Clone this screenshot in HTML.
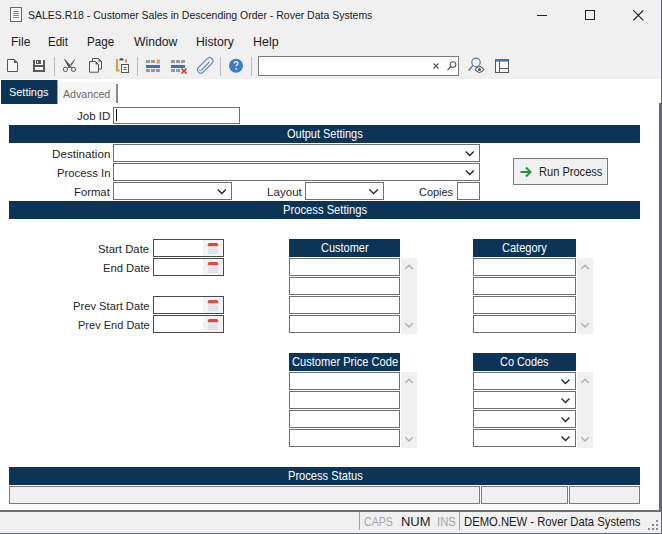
<!DOCTYPE html>
<html><head><meta charset="utf-8">
<style>
*{box-sizing:border-box;margin:0;padding:0}
html,body{width:662px;height:534px;overflow:hidden;background:#fff;font-family:"Liberation Sans",sans-serif}
div,svg{position:absolute}
.t{white-space:pre;line-height:20px;transform-origin:0 0;font-family:"Liberation Sans",sans-serif}
.hd{background:#0c3457}
.in{background:#fff;border:1px solid #707070}
.dk{background:#fff;border:1px solid #4a4a4a}
.sb{background:#f0f0f0}
.sep{width:1px;background:#c8c8c8}
</style></head><body>
<!-- chrome -->
<div style="left:0;top:0;width:662px;height:79px;background:#f0f0f0"></div>
<!-- title icon -->
<svg style="left:0;top:0" width="30" height="30" viewBox="0 0 30 30"><rect x="10.5" y="7.5" width="11" height="14" fill="#f6f6f6" stroke="#666" stroke-width="1"/><path d="M13 11.5h6M13 13.5h6M13 15.5h6M13 17.5h6" stroke="#888" stroke-width="1"/></svg>
<!-- window controls -->
<div style="left:537px;top:15px;width:10px;height:1px;background:#222"></div>
<div style="left:585px;top:10px;width:10px;height:10px;border:1px solid #222"></div>
<svg style="left:633px;top:10px" width="11" height="11" viewBox="0 0 11 11"><path d="M0.3 0.3L10.3 10.3M10.3 0.3L0.3 10.3" stroke="#222" stroke-width="1.1"/></svg>

<!-- toolbar icons -->
<svg style="left:0;top:54px" width="520" height="25" viewBox="0 54 520 25">
 <!-- new -->
 <path d="M7.5 59.5h6.8l3.2 3.2v8.8h-10z" fill="#f6f6f6" stroke="#555" stroke-width="1"/>
 <path d="M14 59.5l3.5 3.5h-3.5z" fill="#555"/>
 <!-- save -->
 <rect x="33" y="60" width="12" height="12" fill="#5a5a5a"/>
 <rect x="35" y="60" width="8" height="5" fill="#fafafa"/>
 <rect x="36" y="60" width="5" height="4" fill="#5a5a5a"/>
 <rect x="37" y="61" width="1" height="2" fill="#fafafa"/>
 <rect x="35" y="67" width="8" height="3" fill="#fafafa"/>
 <rect x="54" y="57" width="1" height="19" fill="#bcbcbc"/>
 <!-- scissors -->
 <path d="M64 59.3l0.9-0.3 6.6 7.4-1.6 1.5-2.2-1.8z" fill="#555"/>
 <path d="M74.6 59.2l0.5 0.5-3.6 5.9-1.3-1.1z" fill="#555"/>
 <path d="M70.3 66.8l-3.2 1.2M70.3 66.8l1.8 1.2" stroke="#555" stroke-width="1"/>
 <circle cx="65.4" cy="69.4" r="2.15" fill="none" stroke="#555" stroke-width="1"/>
 <circle cx="73.5" cy="69.4" r="2.15" fill="none" stroke="#555" stroke-width="1"/>
 <!-- copy -->
 <path d="M92.5 58.5h6l3 3v7.5h-9z" fill="#f6f6f6" stroke="#555" stroke-width="1"/>
 <path d="M98.5 58.5l3 3h-3z" fill="#555"/>
 <path d="M89.5 61.5h6l3 3v7.7h-9z" fill="#f6f6f6" stroke="#555" stroke-width="1"/>
 <path d="M95.5 61.5l3 3h-3z" fill="#555"/>
 <!-- paste -->
 <path d="M117 59v11.5h2.7M126 59v3.5" stroke="#e89a3a" stroke-width="2" fill="none"/>
 <path d="M119.2 60.5c0-1.5 1-2.5 2.25-2.5s2.25 1 2.25 2.5z" fill="#555"/>
 <rect x="121.5" y="64.5" width="7" height="8" fill="#fafafa" stroke="#555" stroke-width="1"/>
 <path d="M123.5 67.5h3M123.5 69.5h3" stroke="#555" stroke-width="1"/>
 <rect x="137" y="57" width="1" height="19" fill="#bcbcbc"/>
 <!-- insert row -->
 <rect x="146" y="60" width="4" height="3" fill="#999"/><rect x="151" y="60" width="4" height="3" fill="#999"/><rect x="156.5" y="59.5" width="3.5" height="4" fill="#e8a050"/>
 <rect x="146" y="65" width="14" height="3" fill="#3a74b8"/>
 <rect x="146" y="69" width="4" height="3" fill="#999"/><rect x="151" y="69" width="4" height="3" fill="#999"/><rect x="156" y="69" width="4" height="3" fill="#999"/>
 <!-- delete row -->
 <rect x="171" y="60" width="4" height="3" fill="#999"/><rect x="176" y="60" width="4" height="3" fill="#999"/><rect x="181" y="60" width="4" height="3" fill="#999"/>
 <rect x="171" y="65" width="14" height="3" fill="#3a74b8"/>
 <rect x="171" y="69" width="4" height="3" fill="#999"/><rect x="176" y="69" width="4" height="3" fill="#999"/>
 <path d="M181.5 68.5l5 5M186.5 68.5l-5 5" stroke="#d03030" stroke-width="1.6"/>
 <!-- paperclip -->
 <g transform="translate(205.2 65.4) rotate(-45)">
  <rect x="-9.5" y="-3.3" width="19" height="6.6" rx="3.3" fill="#e6f0fa" stroke="#5a7ca4" stroke-width="1"/>
  <path d="M-6 0.6h11.5" stroke="#4f7299" stroke-width="1" fill="none"/>
  <path d="M-6 0.6c-1 0-1.6-.8-1.6-1.4" stroke="#4f7299" stroke-width="0.9" fill="none"/>
 </g>
 <rect x="220" y="57" width="1" height="19" fill="#bcbcbc"/>
 <!-- help -->
 <circle cx="236" cy="65.8" r="7" fill="#3d7cc4"/>
 <path d="M234.3 63.6c0-1.2.8-1.9 1.8-1.9s1.8.7 1.8 1.7c0 1.3-1.7 1.4-1.7 2.9" fill="none" stroke="#fff" stroke-width="1.3"/>
 <rect x="235.4" y="68.2" width="1.5" height="1.5" fill="#fff"/>
 <rect x="251" y="57" width="1" height="19" fill="#bcbcbc"/>
 <!-- search box -->
 <rect x="258.5" y="56.5" width="200" height="19" fill="#fff" stroke="#7a7a7a"/>
 <path d="M433.5 63.5l5 5M438.5 63.5l-5 5" stroke="#555" stroke-width="1.1"/>
 <circle cx="453" cy="64.5" r="2.8" fill="none" stroke="#555" stroke-width="1.1"/>
 <path d="M451 66.5l-3.5 3.5" stroke="#555" stroke-width="1.2"/>
 <!-- search-eye -->
 <circle cx="476" cy="62.4" r="4.2" fill="#eef4fa" stroke="#5679a2" stroke-width="1.2"/>
 <path d="M473 65.6l-4.3 4.8" stroke="#5679a2" stroke-width="1.5"/>
 <path d="M475.2 69.5c1.3-2 2.8-3 4.3-3s3 1 4.3 3c-1.3 2-2.8 3-4.3 3s-3-1-4.3-3z" fill="#fafafa" stroke="#555" stroke-width="1.1"/>
 <circle cx="479.5" cy="69.5" r="1.6" fill="#555"/>
 <!-- layout -->
 <rect x="495.5" y="59.5" width="13" height="13" fill="#fafafa" stroke="#555" stroke-width="1"/>
 <rect x="495" y="59" width="14" height="2.6" fill="#3d74b4"/>
 <path d="M499.5 61.5v11M500 68.5h8" stroke="#555" stroke-width="1"/>
</svg>

<!-- tabs -->
<div style="left:1px;top:80px;width:56px;height:24px;background:#0c3457"></div>
<div style="left:57px;top:80px;width:1px;height:24px;background:#8fa2b6"></div>
<div style="left:59px;top:82px;width:57px;height:20px;background:#f6f6f6"></div>
<div style="left:116px;top:84px;width:2px;height:19px;background:#8a8a8a"></div>

<!-- Job ID -->
<div class="in" style="left:113px;top:107px;width:127px;height:17px"></div>
<div style="left:116px;top:109px;width:1px;height:12px;background:#111"></div>

<!-- Output Settings -->
<div class="hd" style="left:9px;top:125px;width:631px;height:18px"></div>
<div class="in" style="left:113px;top:144px;width:367px;height:18px"></div>
<div class="in" style="left:113px;top:163px;width:367px;height:18px"></div>
<div class="in" style="left:113px;top:182px;width:119px;height:18px"></div>
<div class="in" style="left:305px;top:182px;width:79px;height:18px"></div>
<div class="in" style="left:457px;top:182px;width:23px;height:18px"></div>


<!-- Run Process -->
<div style="left:513px;top:158px;width:95px;height:27px;background:#f0f0f0;border:1px solid #7a7a7a"></div>
<svg style="left:519px;top:165.8px" width="16" height="12" viewBox="0 0 16 12"><path d="M1.5 6h10M7 1.5l4.5 4.5-4.5 4.5" fill="none" stroke="#1a9a30" stroke-width="2"/></svg>

<!-- Process Settings -->
<div class="hd" style="left:9px;top:201px;width:631px;height:18px"></div>

<!-- dates -->
<div class="dk" style="left:153px;top:239px;width:71px;height:18px"></div>
<div class="dk" style="left:153px;top:258px;width:71px;height:18px"></div>
<div class="dk" style="left:153px;top:296px;width:71px;height:18px"></div>
<div class="dk" style="left:153px;top:315px;width:71px;height:18px"></div>
<svg style="left:203px;top:240px" width="20" height="92" viewBox="0 0 20 92">
 <g id="cal">
 <rect x="0" y="0" width="20" height="16" fill="#f3f3f3"/>
 <path d="M4.8 6.2v-1.6c0-1 1-1.6 2.2-1.6h6c1.2 0 2.2.6 2.2 1.6v1.6z" fill="#e0483e"/>
 <rect x="5" y="7" width="10" height="7" fill="#e3e9ee"/>
 <path d="M5 9.5h10M5 11.5h10M5 13.5h10" stroke="#d6dce1" stroke-width="0.7"/>
 </g>
 <use href="#cal" y="19"/>
 <use href="#cal" y="57"/>
 <use href="#cal" y="76"/>
</svg>

<!-- Customer -->
<div class="hd" style="left:289px;top:239px;width:111px;height:18px"></div>
<div class="in" style="left:289px;top:258px;width:111px;height:18px"></div>
<div class="in" style="left:289px;top:277px;width:111px;height:18px"></div>
<div class="in" style="left:289px;top:296px;width:111px;height:18px"></div>
<div class="in" style="left:289px;top:315px;width:111px;height:18px"></div>
<div class="sb" style="left:401px;top:258px;width:16px;height:76px"></div>
<!-- Category -->
<div class="hd" style="left:473px;top:239px;width:103px;height:18px"></div>
<div class="in" style="left:473px;top:258px;width:103px;height:18px"></div>
<div class="in" style="left:473px;top:277px;width:103px;height:18px"></div>
<div class="in" style="left:473px;top:296px;width:103px;height:18px"></div>
<div class="in" style="left:473px;top:315px;width:103px;height:18px"></div>
<div class="sb" style="left:577px;top:258px;width:16px;height:76px"></div>
<!-- Customer Price Code -->
<div class="hd" style="left:289px;top:353px;width:111px;height:18px"></div>
<div class="in" style="left:289px;top:372px;width:111px;height:18px"></div>
<div class="in" style="left:289px;top:391px;width:111px;height:18px"></div>
<div class="in" style="left:289px;top:410px;width:111px;height:18px"></div>
<div class="in" style="left:289px;top:429px;width:111px;height:18px"></div>
<div class="sb" style="left:401px;top:372px;width:16px;height:76px"></div>
<!-- Co Codes -->
<div class="hd" style="left:473px;top:353px;width:103px;height:18px"></div>
<div class="in" style="left:473px;top:372px;width:103px;height:18px"></div>
<div class="in" style="left:473px;top:391px;width:103px;height:18px"></div>
<div class="in" style="left:473px;top:410px;width:103px;height:18px"></div>
<div class="in" style="left:473px;top:429px;width:103px;height:18px"></div>
<div class="sb" style="left:577px;top:372px;width:16px;height:76px"></div>

<!-- Process Status -->
<div class="hd" style="left:9px;top:467px;width:631px;height:18px"></div>
<div style="left:9px;top:486px;width:471px;height:18px;background:#f0f0f0;border:1px solid #7a7a7a"></div>
<div style="left:481px;top:486px;width:87px;height:18px;background:#f0f0f0;border:1px solid #7a7a7a"></div>
<div style="left:569px;top:486px;width:71px;height:18px;background:#f0f0f0;border:1px solid #7a7a7a"></div>

<!-- status bar -->
<div style="left:0;top:510px;width:662px;height:2px;background:#6e6e6e"></div>
<div style="left:0;top:512px;width:662px;height:21px;background:#f0f0f0"></div>
<div style="left:0;top:533px;width:662px;height:1px;background:#5b6b87"></div>
<div style="left:359px;top:512px;width:1px;height:18px;background:#a0a0a0"></div>
<div style="left:459px;top:512px;width:1px;height:18px;background:#a0a0a0"></div>
<svg style="left:647px;top:519px" width="12" height="12" viewBox="0 0 12 12" fill="#8a8a8a">
 <rect x="9" y="1" width="2" height="2"/>
 <rect x="5" y="5" width="2" height="2"/><rect x="9" y="5" width="2" height="2"/>
 <rect x="1" y="9" width="2" height="2"/><rect x="5" y="9" width="2" height="2"/><rect x="9" y="9" width="2" height="2"/>
</svg>

<!-- right edge -->
<div style="left:661px;top:0;width:1px;height:534px;background:#5b6b87"></div>
<div style="left:659px;top:103px;width:3px;height:407px;background:#5b6b87"></div>

<svg style="left:0;top:0" width="662" height="534" viewBox="0 0 662 534">
 <g fill="none" stroke="#222" stroke-width="1.3">
  <path d="M465.8 151.5l4 4 4-4"/>
  <path d="M465.8 170.5l4 4 4-4"/>
  <path d="M217.8 189.5l4 4 4-4"/>
  <path d="M369.3 189.3l4.3 4.3 4.3-4.3"/>
  <path d="M561.5 379.5l4 4 4-4"/>
  <path d="M561.5 398.5l4 4 4-4"/>
  <path d="M561.5 417.5l4 4 4-4"/>
  <path d="M561.5 436.5l4 4 4-4"/>
 </g>
 <g fill="none" stroke="#b0b0b0" stroke-width="1.4">
  <path d="M405.3 269l3.7-3.7 3.7 3.7M405.3 323.3l3.7 3.7 3.7-3.7"/>
  <path d="M581.3 269l3.7-3.7 3.7 3.7M581.3 323.3l3.7 3.7 3.7-3.7"/>
  <path d="M405.3 383l3.7-3.7 3.7 3.7M405.3 437.3l3.7 3.7 3.7-3.7"/>
  <path d="M581.3 383l3.7-3.7 3.7 3.7M581.3 437.3l3.7 3.7 3.7-3.7"/>
 </g>
</svg>
<div class="t" style="left:28.28px;top:4.98px;font-size:11.60px;color:#1a1a1a;transform:scaleX(0.9043)">SALES.R18 - Customer Sales in Descending Order - Rover Data Systems</div>
<div class="t" style="left:11.44px;top:31.93px;font-size:13.20px;color:#1a1a1a;transform:scaleX(0.9120)">File</div>
<div class="t" style="left:48.48px;top:31.93px;font-size:13.20px;color:#1a1a1a;transform:scaleX(0.8748)">Edit</div>
<div class="t" style="left:87.07px;top:31.93px;font-size:13.20px;color:#1a1a1a;transform:scaleX(0.8841)">Page</div>
<div class="t" style="left:133.50px;top:31.93px;font-size:13.20px;color:#1a1a1a;transform:scaleX(0.9224)">Window</div>
<div class="t" style="left:195.72px;top:31.93px;font-size:13.20px;color:#1a1a1a;transform:scaleX(0.9247)">History</div>
<div class="t" style="left:252.50px;top:31.93px;font-size:13.20px;color:#1a1a1a;transform:scaleX(0.9448)">Help</div>
<div class="t" style="left:8.96px;top:82.08px;font-size:11.30px;color:#ffffff;transform:scaleX(0.9666)">Settings</div>
<div class="t" style="left:63.30px;top:83.68px;font-size:11.30px;color:#6d6d6d;transform:scaleX(0.9411)">Advanced</div>
<div class="t" style="left:76.78px;top:106.02px;font-size:11.50px;color:#262626;transform:scaleX(1.0050)">Job ID</div>
<div class="t" style="left:51.57px;top:144.02px;font-size:11.50px;color:#262626;transform:scaleX(1.0149)">Destination</div>
<div class="t" style="left:56.50px;top:162.72px;font-size:11.50px;color:#262626;transform:scaleX(0.9837)">Process In</div>
<div class="t" style="left:73.80px;top:181.72px;font-size:11.50px;color:#262626;transform:scaleX(0.9824)">Format</div>
<div class="t" style="left:266.67px;top:181.72px;font-size:11.50px;color:#262626;transform:scaleX(1.0079)">Layout</div>
<div class="t" style="left:419.25px;top:181.72px;font-size:11.50px;color:#262626;transform:scaleX(0.9519)">Copies</div>
<div class="t" style="left:538.81px;top:161.77px;font-size:12.20px;color:#1e1e1e;transform:scaleX(0.9081)">Run Process</div>
<div class="t" style="left:98.15px;top:239.02px;font-size:11.50px;color:#262626;transform:scaleX(0.9883)">Start Date</div>
<div class="t" style="left:102.50px;top:257.82px;font-size:11.50px;color:#262626;transform:scaleX(0.9761)">End Date</div>
<div class="t" style="left:72.70px;top:296.02px;font-size:11.50px;color:#262626;transform:scaleX(0.9731)">Prev Start Date</div>
<div class="t" style="left:77.52px;top:314.52px;font-size:11.50px;color:#262626;transform:scaleX(0.9584)">Prev End Date</div>
<div class="t" style="left:286.76px;top:123.67px;font-size:12.20px;color:#ffffff;transform:scaleX(0.9010)">Output Settings</div>
<div class="t" style="left:282.60px;top:199.57px;font-size:12.20px;color:#ffffff;transform:scaleX(0.9202)">Process Settings</div>
<div class="t" style="left:287.71px;top:465.67px;font-size:12.20px;color:#ffffff;transform:scaleX(0.9120)">Process Status</div>
<div class="t" style="left:321.05px;top:237.77px;font-size:12.20px;color:#ffffff;transform:scaleX(0.9019)">Customer</div>
<div class="t" style="left:501.75px;top:237.77px;font-size:12.20px;color:#ffffff;transform:scaleX(0.9040)">Category</div>
<div class="t" style="left:291.94px;top:351.77px;font-size:12.20px;color:#ffffff;transform:scaleX(0.9111)">Customer Price Code</div>
<div class="t" style="left:499.75px;top:351.77px;font-size:12.20px;color:#ffffff;transform:scaleX(0.8954)">Co Codes</div>
<div class="t" style="left:364.47px;top:511.58px;font-size:11.90px;color:#a5a5a5;transform:scaleX(0.8894)">CAPS</div>
<div class="t" style="left:401.36px;top:511.58px;font-size:11.90px;color:#1a1a1a;transform:scaleX(1.0878)">NUM</div>
<div class="t" style="left:436.68px;top:511.58px;font-size:11.90px;color:#a5a5a5;transform:scaleX(0.9549)">INS</div>
<div class="t" style="left:464.30px;top:511.58px;font-size:11.90px;color:#1a1a1a;transform:scaleX(0.9468)">DEMO.NEW - Rover Data Systems</div>
</body></html>
